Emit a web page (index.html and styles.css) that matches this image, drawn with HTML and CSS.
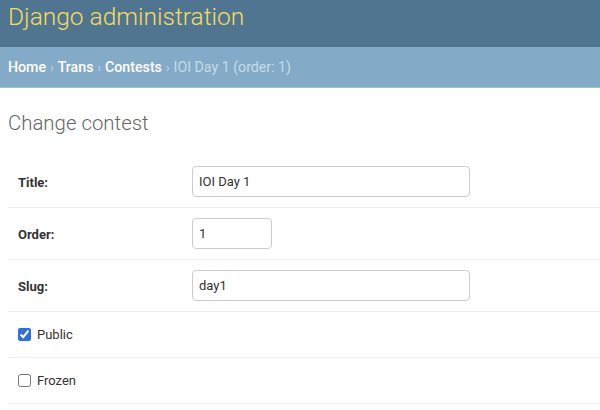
FILE: index.html
```html
<!DOCTYPE html>
<html>
<head>
<meta charset="utf-8">
<link rel="stylesheet" href="styles.css">
</head>
<body>
<header class="header">
  <div class="branding">Django administration</div>
</header>
<nav class="breadcrumbs">
  <a href="#">Home</a><span class="sep">›</span><a href="#">Trans</a><span class="sep">›</span><a href="#">Contests</a><span class="sep">›</span><span class="current">IOI Day 1 (order: 1)</span>
</nav>
<main class="content">
  <h1 class="page-title">Change contest</h1>
  <form class="form">
    <div class="form-row">
      <label class="field-label" for="title">Title:</label>
      <input class="text-input wide" id="title" type="text" value="IOI Day 1">
    </div>
    <div class="form-row">
      <label class="field-label" for="order">Order:</label>
      <input class="text-input small" id="order" type="text" value="1">
    </div>
    <div class="form-row">
      <label class="field-label" for="slug">Slug:</label>
      <input class="text-input wide" id="slug" type="text" value="day1">
    </div>
    <div class="form-row check-row">
      <input class="checkbox" id="public" type="checkbox" checked>
      <label class="check-label" for="public">Public</label>
    </div>
    <div class="form-row check-row">
      <input class="checkbox" id="frozen" type="checkbox">
      <label class="check-label" for="frozen">Frozen</label>
    </div>
  </form>
</main>
</body>
</html>
```

FILE: styles.css
```css
* { box-sizing: border-box; }
html, body { margin: 0; padding: 0; background: #fff; }
body {
  font-family: Roboto, "Liberation Sans", sans-serif;
  color: #333;
  font-size: 13px;
}
.header {
  height: 47px;
  background: #4f7590;
  padding: 3px 8px 0;
}
.branding {
  font-size: 24.5px;
  line-height: 28px;
  font-weight: 300;
  color: #f5dd5d;
}
.breadcrumbs {
  height: 41px;
  background: #83aac6;
  border-bottom: 1px solid #9fc0d6;
  padding: 0 8px;
  font-size: 14.2px;
  line-height: 40px;
  color: #c4dce8;
}
.breadcrumbs a {
  color: #fff;
  text-decoration: none;
  font-weight: 500;
}
.breadcrumbs .sep {
  color: #c4dce8;
  margin: 0 4px;
  font-size: 12px;
}
.breadcrumbs .current { color: #c4dce8; }
.content { padding: 0 0 0 8px; }
.page-title {
  margin: 0;
  padding-top: 22px;
  font-size: 20.4px;
  line-height: 26px;
  font-weight: 300;
  color: #666;
  height: 68px;
}
.form { display: flex; flex-direction: column; }
.form-row {
  display: flex;
  align-items: center;
  padding: 10px;
  border-bottom: 1px solid #eee;
  min-height: 52px;
}
.field-label {
  width: 174px;
  flex: none;
  font-weight: 700;
  font-size: 13px;
  color: #333;
  padding-top: 2px;
}
.text-input {
  height: 31px;
  border: 1px solid #ccc;
  border-radius: 4px;
  padding: 5px 6px;
  font-family: Roboto, "Liberation Sans", sans-serif;
  font-size: 13px;
  color: #333;
  background: #fff;
}
.wide { width: 278px; }
.small { width: 80px; }
.check-row { min-height: 46px; }
.checkbox {
  width: 13px;
  height: 13px;
  margin: 0 6px 0 0;
  accent-color: #2f6fe0;
}
.check-label {
  font-size: 13px;
  color: #333;
}
```
